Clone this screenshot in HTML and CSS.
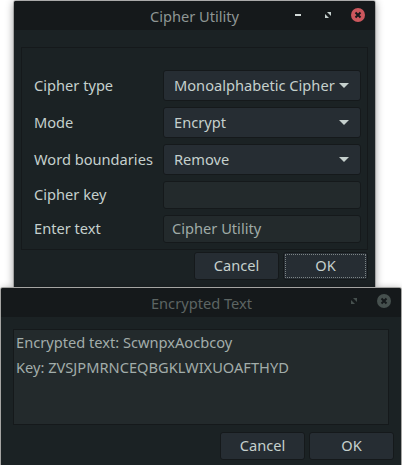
FILE: index.html
```html
<!DOCTYPE html>
<html lang="en">
<head>
<meta charset="utf-8">
<title>Cipher Utility</title>
<link rel="stylesheet" href="styles.css">
</head>
<body>
<main class="desktop">
  <section class="window window-main">
    <header class="titlebar">
      <h1 class="title">Cipher Utility</h1>
      <div class="controls">
        <svg class="control" viewBox="0 0 14 14"><path d="M4 6h6v2H4z" fill="#d3dad8"/></svg>
        <svg class="control" viewBox="0 0 14 14"><path d="M6 4h4v4zM4 6v4h4z" fill="#c5d0cd"/></svg>
        <svg class="control" viewBox="0 0 14 14"><circle cx="7" cy="7" r="7" fill="#cc575d"/><path d="M4.5 4.5l5 5M9.5 4.5l-5 5" stroke="#15191b" stroke-width="2"/></svg>
      </div>
    </header>
    <form class="form">
      <div class="row"><span class="label">Cipher type</span><div class="combo">Monoalphabetic Cipher<svg class="arrow" viewBox="0 0 10 5"><path d="M0 0h10L5 5z"/></svg></div></div>
      <div class="row"><span class="label">Mode</span><div class="combo">Encrypt<svg class="arrow" viewBox="0 0 10 5"><path d="M0 0h10L5 5z"/></svg></div></div>
      <div class="row"><span class="label">Word boundaries</span><div class="combo">Remove<svg class="arrow" viewBox="0 0 10 5"><path d="M0 0h10L5 5z"/></svg></div></div>
      <div class="row"><span class="label">Cipher key</span><div class="entry"></div></div>
      <div class="row"><span class="label">Enter text</span><div class="entry">Cipher Utility</div></div>
    </form>
    <footer class="actions">
      <button class="button">Cancel</button>
      <button class="button focused">OK</button>
    </footer>
  </section>
  <section class="window window-result">
    <header class="titlebar">
      <h1 class="title">Encrypted Text</h1>
      <div class="controls">
        <svg class="control" viewBox="0 0 14 14"><path d="M6 4h4v4zM4 6v4h4z" fill="#46504e"/></svg>
        <svg class="control" viewBox="0 0 14 14"><circle cx="7" cy="7" r="7" fill="#46504e"/><path d="M4.5 4.5l5 5M9.5 4.5l-5 5" stroke="#15191b" stroke-width="2"/></svg>
      </div>
    </header>
    <div class="output"><p>Encrypted text: ScwnpxAocbcoy</p><p>Key: ZVSJPMRNCEQBGKLWIXUOAFTHYD</p></div>
    <footer class="actions">
      <button class="button">Cancel</button>
      <button class="button">OK</button>
    </footer>
  </section>
</main>
</body>
</html>
```

FILE: styles.css
```css
* { box-sizing: border-box; }
body {
  margin: 0;
  background: #fff;
  font: 14.63px/20px "Noto Sans", sans-serif;
  color: #c5d0cd;
}
.desktop {
  width: 402px;
  height: 465px;
  padding-top: 1px;
  overflow: hidden;
}
.window {
  background: #1b2224;
  border-radius: 2px 2px 0 0;
  box-shadow: 0 0 0 1px rgba(0, 0, 0, .2), 0 1px 8px rgba(0, 0, 0, .45);
}
.window-main { width: 361px; height: 286px; margin-left: 14px; }
.window-result {
  position: relative;
  width: 400px;
  height: 180px;
  margin: 1px 0 0 1px;
  box-shadow: 0 0 0 1px #a5a5a3, 0 0 7px rgba(0, 0, 0, .3);
}
.titlebar {
  display: grid;
  grid-template-columns: 80px 1fr 80px;
  height: 29px;
  background: #15191b;
  border-radius: 2px 2px 0 0;
}
.title {
  grid-column: 2;
  margin: 0;
  padding-top: 5px;
  font-size: inherit;
  font-weight: 400;
  text-align: center;
  color: #8e9694;
}
.window-result .title { padding-left: 1px; color: #5d6563; }
.controls {
  display: flex;
  justify-content: flex-end;
  gap: 16px;
  padding: 7px 10px 0 0;
}
.control { flex: none; width: 14px; height: 14px; }
.window-result .controls { padding-top: 6px; }
.form {
  display: flex;
  flex-direction: column;
  gap: 6px;
  height: 203px;
  margin: 17px 7px 0;
  padding: 22px 6px 0 12px;
  border: 1px solid #15191b;
}
.row { display: grid; grid-template-columns: 129px 198px; align-items: center; }
.label { padding-bottom: 2px; white-space: nowrap; }
.combo, .entry, .button {
  border: 1px solid #15191b;
  border-radius: 3px;
}
.combo {
  display: flex;
  align-items: center;
  justify-content: space-between;
  height: 31px;
  padding: 0 11px 2px 10px;
  background: #262d33;
  white-space: nowrap;
}
.arrow { flex: none; width: 10px; height: 5px; margin-top: 2px; fill: #c5d0cd; }
.entry {
  height: 28px;
  padding: 2px 8px;
  background: #232a2c;
  color: #9faaa7;
}
.actions {
  display: flex;
  justify-content: flex-end;
  gap: 4px;
  padding: 2px 7px 0 0;
}
.button {
  width: 85px;
  height: 28px;
  padding: 0 0 2px;
  background: #262d33;
  color: inherit;
  font: inherit;
}
.focused { position: relative; }
.focused::after {
  content: "";
  position: absolute;
  inset: 1px;
  border: 1px dotted #7c8485;
  border-radius: 1px;
}
.output {
  height: 96px;
  margin: 12px 12px 0;
  padding: 0 2px;
  border: 1px solid #15191b;
  background: #232a2c;
  color: #a2adaa;
  line-height: 25px;
}
.output p { margin: 0; }
.window-result .actions { padding: 7px 7px 0 0; }
```
